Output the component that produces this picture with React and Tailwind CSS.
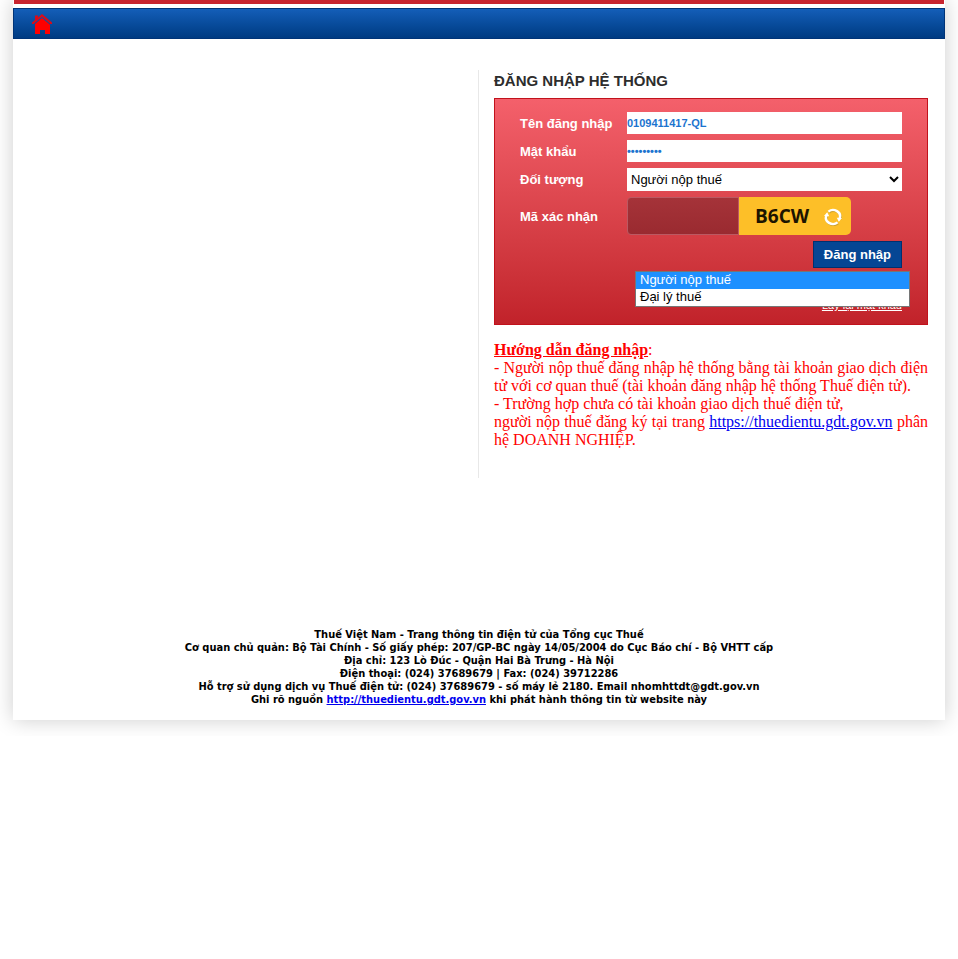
import { useState } from 'react';

const labelClass = 'pt-px text-[13px] leading-5 font-bold text-white';
const fieldClass =
  'block h-[22px] w-full bg-white p-0 text-[11px] font-bold text-[#1c74cf] outline-none';

const options = ['Người nộp thuế', 'Đại lý thuế'];

function HomeIcon() {
  return (
    <svg viewBox="0 0 20 20" className="h-5 w-5" fill="#fe0000" aria-hidden="true">
      <path d="M10 0 L13 2.6 L20 8.6 V10 H18.4 L10 2.8 L1.6 10 H0 V8.6 L3 6 V1.6 H6 V3.4 Z" opacity="0.85" />
      <path d="M10 4 L18 10.8 V20 H13 V16 H8 V20 H3 V10 Z" />
    </svg>
  );
}

function RefreshIcon() {
  return (
    <svg viewBox="0 0 18 18" className="h-[18px] w-[18px]" aria-hidden="true">
      <g fill="none" stroke="#8d7a3a" strokeWidth="2.4" opacity="0.4" transform="translate(0.6 0.9)">
        <path d="M4.4 3.6 A7 6.2 0 0 1 15.6 10.4" />
        <path d="M13.6 14.4 A7 6.2 0 0 1 2.4 7.6" />
      </g>
      <g fill="none" stroke="#ffffff" strokeWidth="2.4">
        <path d="M4.4 3.6 A7 6.2 0 0 1 15.6 10.4" />
        <path d="M13.6 14.4 A7 6.2 0 0 1 2.4 7.6" />
      </g>
      <path fill="#ffffff" d="M12.8 9.8 L18 10 L14.8 13.8 Z M5.2 8.2 L0 8 L3.2 4.2 Z" />
    </svg>
  );
}

function LoginForm() {
  const [user, setUser] = useState('0109411417-QL');
  const [password, setPassword] = useState('matkhau01');
  const [kind, setKind] = useState(options[0]);
  const [code, setCode] = useState('');

  return (
    <form
      onSubmit={(e) => e.preventDefault()}
      className="relative mt-1.5 border border-[#c1121c] bg-linear-to-b from-[#f4606b] to-[#c1222a] px-[25px] pt-[13px] pb-[11px]"
    >
      <div className="grid grid-cols-[107px_1fr] items-center gap-y-1.5">
        <label htmlFor="user" className={labelClass}>Tên đăng nhập</label>
        <input id="user" value={user} onChange={(e) => setUser(e.target.value)} className={fieldClass} />

        <label htmlFor="password" className={labelClass}>Mật khẩu</label>
        <input id="password" type="password" value={password} onChange={(e) => setPassword(e.target.value)} className={fieldClass} />

        <label htmlFor="kind" className={labelClass}>Đối tượng</label>
        <select id="kind" value={kind} onChange={(e) => setKind(e.target.value)} className="block h-[23px] w-full bg-white text-[13px] text-black outline-none">
          {options.map((o) => <option key={o}>{o}</option>)}
        </select>

        <label htmlFor="code" className={labelClass}>Mã xác nhận</label>
        <div className="flex h-[38px]">
          <input
            id="code"
            value={code}
            onChange={(e) => setCode(e.target.value)}
            className="w-28 rounded-l-[4px] border border-[#bb5962] bg-linear-to-b from-[#a53339] to-[#9a2a30] px-2 text-white outline-none"
          />
          <div className="flex w-28 items-center justify-between rounded-r-[5px] bg-[#fdbf28] pr-[9px] pl-4">
            <span className="font-['Open_Sans',sans-serif] text-[19px] leading-6 font-bold text-[#1c1400]">B6CW</span>
            <button type="button" aria-label="Đổi mã xác nhận" className="pt-0.5"><RefreshIcon /></button>
          </div>
        </div>
      </div>

      <div className="mt-1.5 flex justify-end">
        <button type="submit" className="h-[27px] border border-[#00306f] bg-[#054694] px-2.5 text-[13px] font-bold text-white">
          Đăng nhập
        </button>
      </div>
      <div className="mt-[29px] text-right text-[11px] leading-4">
        <a href="#reset" className="text-white underline">Lấy lại mật khẩu</a>
      </div>

      <ul
        role="listbox"
        aria-label="Đối tượng"
        className="absolute top-[172px] right-[17px] left-[140px] border border-[#767676] bg-white text-[13px] leading-4 text-black"
      >
        <li role="option" aria-selected="true" className="h-[17px] bg-[#1e90ff] px-1 text-white">{options[0]}</li>
        <li role="option" aria-selected="false" className="h-[17px] px-1">{options[1]}</li>
      </ul>
    </form>
  );
}

function Guide() {
  return (
    <div className="mt-4 text-justify font-['Liberation_Serif',serif] text-[16px] leading-[18px] text-[#ff0000]">
      <p><b className="underline">Hướng dẫn đăng nhập</b>:</p>
      <p>- Người nộp thuế đăng nhập hệ thống bằng tài khoản giao dịch điện tử với cơ quan thuế (tài khoản đăng nhập hệ thống Thuế điện tử).</p>
      <p>- Trường hợp chưa có tài khoản giao dịch thuế điện tử,</p>
      <p>
        người nộp thuế đăng ký tại trang{' '}
        <a href="#thuedientu" className="text-[#0000ee] underline">https://thuedientu.gdt.gov.vn</a>{' '}
        phân hệ DOANH NGHIỆP.
      </p>
    </div>
  );
}

export default function App() {
  return (
    <div className="bg-white px-[13px] pb-4 font-['Liberation_Sans',Arial,sans-serif]">
      <div className="bg-white pb-3.5 shadow-[0_0_20px_rgba(0,0,0,0.2)]">
        <div className="mx-px h-1 bg-[#c8242f]" />
        <nav className="mt-1 flex h-[31px] items-center border border-[#003478] bg-linear-to-b from-[#145eb8] to-[#003b82] pl-[18px]">
          <a href="#home" aria-label="Trang chủ"><HomeIcon /></a>
        </nav>

        <main className="mt-[31px] grid min-h-[408px] grid-cols-2">
          <div />
          <section className="-ml-px border-l border-[#e8e8e8] pr-[17px] pl-[15px]">
            <h1 className="text-[15px] leading-[22px] font-bold text-[#2d2d2d]">ĐĂNG NHẬP HỆ THỐNG</h1>
            <LoginForm />
            <Guide />
          </section>
        </main>

        <footer className="mt-[150px] text-center font-['DejaVu_Sans_Condensed','DejaVu_Sans',sans-serif] text-[11px] leading-[13px] font-bold text-black">
          <p>Thuế Việt Nam - Trang thông tin điện tử của Tổng cục Thuế</p>
          <p>Cơ quan chủ quản: Bộ Tài Chính - Số giấy phép: 207/GP-BC ngày 14/05/2004 do Cục Báo chí - Bộ VHTT cấp</p>
          <p>Địa chỉ: 123 Lò Đúc - Quận Hai Bà Trưng - Hà Nội</p>
          <p>Điện thoại: (024) 37689679 | Fax: (024) 39712286</p>
          <p>Hỗ trợ sử dụng dịch vụ Thuế điện tử: (024) 37689679 - số máy lẻ 2180. Email nhomhttdt@gdt.gov.vn</p>
          <p>
            Ghi rõ nguồn <a href="#nguon" className="text-[#0000ee] underline">http://thuedientu.gdt.gov.vn</a> khi phát hành thông tin từ website này
          </p>
        </footer>
      </div>
    </div>
  );
}
